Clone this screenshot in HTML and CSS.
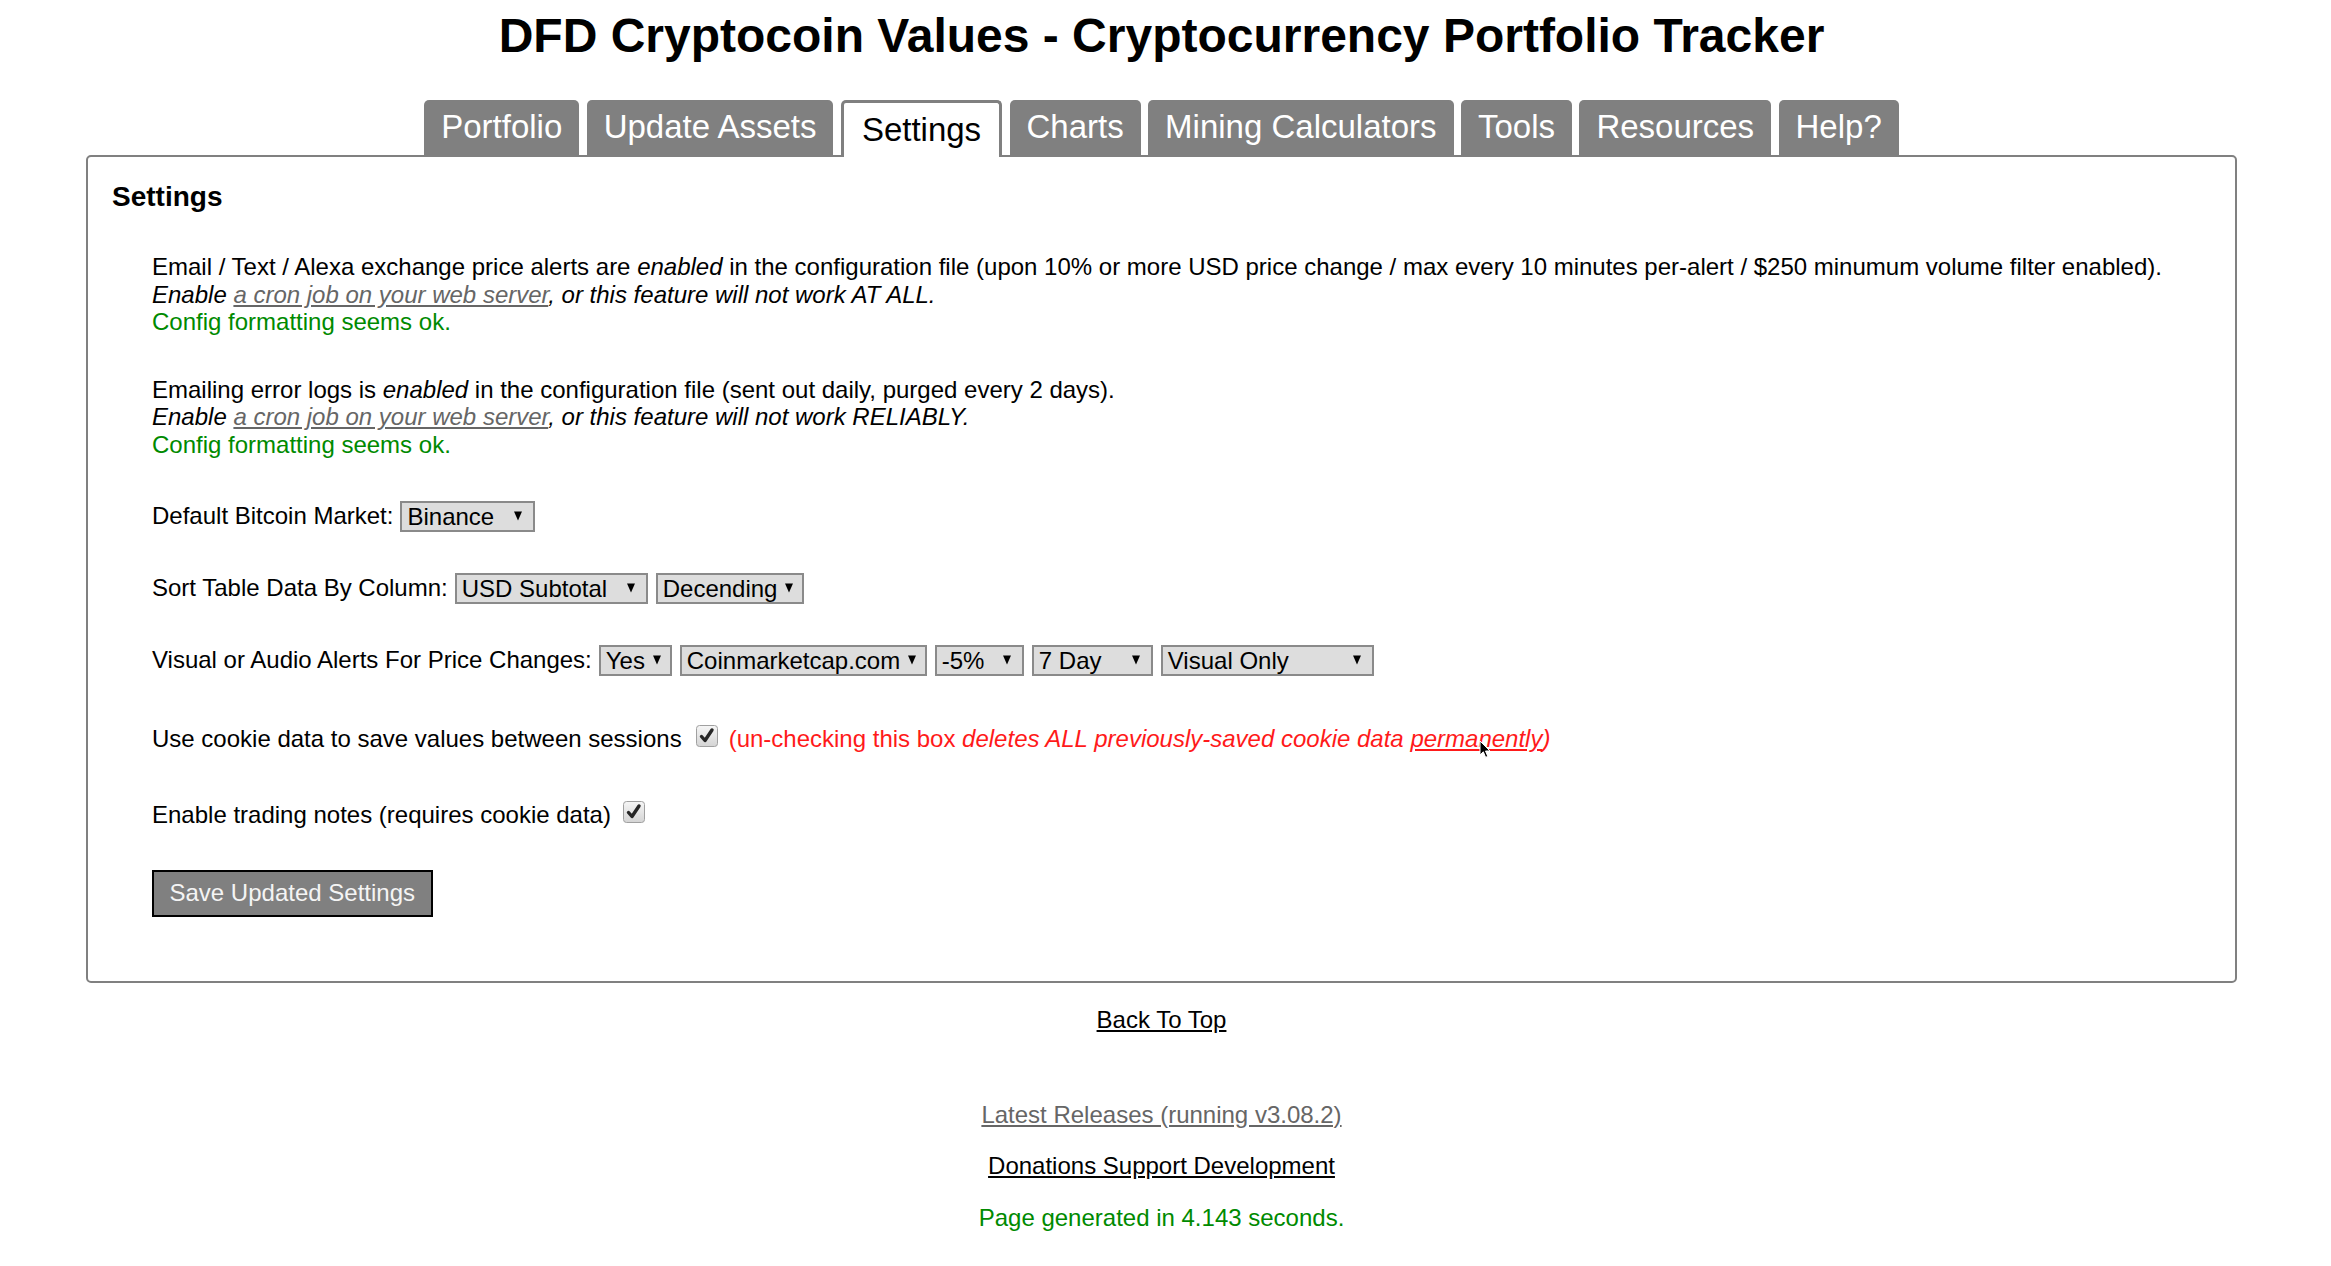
FILE: index.html
```html
<!DOCTYPE html>
<html lang="en">
<head>
<meta charset="utf-8">
<title>DFD Cryptocoin Values - Cryptocurrency Portfolio Tracker</title>
<link rel="stylesheet" href="styles.css">
</head>
<body>
<div class="wrap">
  <h1 class="title">DFD Cryptocoin Values - Cryptocurrency Portfolio Tracker</h1>
  <nav class="tabs">
    <span class="tab">Portfolio</span>
    <span class="tab">Update Assets</span>
    <span class="tab active">Settings</span>
    <span class="tab">Charts</span>
    <span class="tab">Mining Calculators</span>
    <span class="tab">Tools</span>
    <span class="tab">Resources</span>
    <span class="tab">Help?</span>
  </nav>
  <section class="panel">
    <h3 class="panel-title">Settings</h3>
    <div class="content">
      <p class="item">Email / Text / Alexa exchange price alerts are <i>enabled</i> in the configuration file (upon 10% or more USD price change / max every 10 minutes per-alert / $250 minumum volume filter enabled).<br>
      <i>Enable <a class="glink" href="#">a cron job on your web server</a>, or this feature will not work AT ALL.</i><br>
      <span class="ok">Config formatting seems ok.</span></p>

      <p class="item p-last">Emailing error logs is <i>enabled</i> in the configuration file (sent out daily, purged every 2 days).<br>
      <i>Enable <a class="glink" href="#">a cron job on your web server</a>, or this feature will not work RELIABLY.</i><br>
      <span class="ok">Config formatting seems ok.</span></p>

      <div class="item row">
        <span>Default Bitcoin Market:</span>
        <span class="sel w-binance"><span>Binance</span><svg class="arr" viewBox="0 0 8 9"><polygon points="0,0 8,0 4,9"/></svg></span>
      </div>

      <div class="item row">
        <span>Sort Table Data By Column:</span>
        <span class="sel w-usd"><span>USD Subtotal</span><svg class="arr" viewBox="0 0 8 9"><polygon points="0,0 8,0 4,9"/></svg></span>
        <span class="sel w-dec"><span>Decending</span><svg class="arr" viewBox="0 0 8 9"><polygon points="0,0 8,0 4,9"/></svg></span>
      </div>

      <div class="item row row-last">
        <span>Visual or Audio Alerts For Price Changes:</span>
        <span class="sel w-yes"><span>Yes</span><svg class="arr" viewBox="0 0 8 9"><polygon points="0,0 8,0 4,9"/></svg></span>
        <span class="sel w-cmc"><span>Coinmarketcap.com</span><svg class="arr" viewBox="0 0 8 9"><polygon points="0,0 8,0 4,9"/></svg></span>
        <span class="sel w-pct"><span>-5%</span><svg class="arr" viewBox="0 0 8 9"><polygon points="0,0 8,0 4,9"/></svg></span>
        <span class="sel w-day"><span>7 Day</span><svg class="arr" viewBox="0 0 8 9"><polygon points="0,0 8,0 4,9"/></svg></span>
        <span class="sel w-vis"><span>Visual Only</span><svg class="arr" viewBox="0 0 8 9"><polygon points="0,0 8,0 4,9"/></svg></span>
      </div>

      <div class="item crow">
        <span>Use cookie data to save values between sessions</span>
        <svg class="cb" viewBox="0 0 22 22"><defs><linearGradient id="g1" x1="0" y1="0" x2="0" y2="1"><stop offset="0" stop-color="#f6f6f6"/><stop offset="1" stop-color="#d4d4d4"/></linearGradient></defs><rect x="0.5" y="0.5" width="21" height="21" rx="3" fill="url(#g1)" stroke="#a0a0a0"/><path d="M5.5 11.5 L9 15.5 L16 5" fill="none" stroke="#262626" stroke-width="3.4" stroke-linecap="round" stroke-linejoin="round"/></svg>
        <span class="warn">(un-checking this box <i>deletes ALL previously-saved cookie data <a class="rlink" href="#">permanently</a>)</i></span>
      </div>

      <div class="item crow crow-last">
        <span>Enable trading notes (requires cookie data)</span>
        <svg class="cb cb2" viewBox="0 0 22 22"><defs><linearGradient id="g2" x1="0" y1="0" x2="0" y2="1"><stop offset="0" stop-color="#f6f6f6"/><stop offset="1" stop-color="#d4d4d4"/></linearGradient></defs><rect x="0.5" y="0.5" width="21" height="21" rx="3" fill="url(#g2)" stroke="#a0a0a0"/><path d="M5.5 11.5 L9 15.5 L16 5" fill="none" stroke="#262626" stroke-width="3.4" stroke-linecap="round" stroke-linejoin="round"/></svg>
      </div>

      <div class="item">
        <button class="save" type="button">Save Updated Settings</button>
      </div>
    </div>
  </section>

  <footer class="footer">
    <p class="f-top"><a class="blink" href="#">Back To Top</a></p>
    <p class="f-rel"><a class="glink2" href="#">Latest Releases (running v3.08.2)</a></p>
    <p class="f-don"><a class="blink" href="#">Donations Support Development</a></p>
    <p class="f-gen">Page generated in 4.143 seconds.</p>
  </footer>
</div>

<svg class="cursor" viewBox="0 0 12 19"><path d="M1 1 L1 15 L4.3 11.8 L6.6 17.3 L8.8 16.4 L6.5 11 L11 11 Z" fill="#000" stroke="#fff" stroke-width="1"/></svg>
</body>
</html>
```

FILE: styles.css
```css
html, body {
  background: #ffffff;
}
body {
  margin: 8px 0 0;
  font-family: "Liberation Sans", Arial, sans-serif;
  font-size: 24px;
  line-height: 1.15;
  color: #000;
  position: relative;
}
.wrap {
  width: 2151px;
  margin-left: 86px;
}
.title {
  margin: 0;
  font-size: 48px;
  line-height: 55px;
  text-align: center;
  font-weight: bold;
}
.tabs {
  display: flex;
  justify-content: center;
  align-items: flex-end;
  gap: 7.4px;
  margin-top: 37px;
  margin-bottom: -2px;
  position: relative;
  z-index: 1;
}
.tab {
  display: block;
  background: #808080;
  color: #ffffff;
  font-size: 33px;
  line-height: 38px;
  padding: 7.5px 17px 11.5px;
  border-radius: 5px 5px 0 0;
}
.tab.active {
  background: #ffffff;
  color: #000000;
  border: 3px solid #808080;
  border-bottom: none;
  padding: 7.5px 18px 8.5px;
}
.panel {
  border: 2px solid #808080;
  border-radius: 5px;
  padding: 24px 24px 24px;
}
.panel-title {
  margin: 0 0 40px;
  font-size: 28px;
  line-height: 32px;
  font-weight: bold;
}
.content {
  padding-left: 40px;
}
.item {
  margin: 0 0 40px;
}
p.item {
  line-height: 27.6px;
}
.item.p-last {
  margin-bottom: 41.5px;
}
.ok {
  color: #008a00;
}
.glink {
  color: #666666;
  text-decoration: underline;
}
.row {
  display: flex;
  align-items: center;
  gap: 8px;
  height: 32px;
}
.row > span:first-child {
  margin-right: -1px;
}
.item.row-last {
  margin-bottom: 44.5px;
}
.sel {
  box-sizing: border-box;
  display: inline-flex;
  align-items: center;
  justify-content: space-between;
  height: 31px;
  border: 2px solid #8a8a8a;
  background: #dddddd;
  padding: 0 11px 0 5px;
  line-height: 27px;
}
.arr {
  width: 8px;
  height: 10px;
  flex: none;
}
.w-binance { width: 135px; }
.w-usd { width: 193px; }
.w-dec { width: 148px; padding-right: 9px; }
.w-yes { width: 73px; padding-right: 9px; }
.w-cmc { width: 247px; padding-right: 9px; }
.w-pct { width: 89px; }
.w-day { width: 121px; }
.w-vis { width: 213px; }
.crow {
  display: flex;
  align-items: center;
  height: 36px;
}
.item.crow-last {
  margin-bottom: 37px;
}
.cb {
  width: 22px;
  height: 22px;
  margin-left: 14px;
  margin-top: -5px;
  flex: none;
}
.cb2 {
  margin-left: 12px;
}
.warn {
  color: #ff1a1a;
  margin-left: 11px;
}
.rlink {
  color: #ff1a1a;
  text-decoration: underline;
}
.save {
  font-family: "Liberation Sans", Arial, sans-serif;
  font-size: 24px;
  line-height: 28px;
  color: #f4f4f4;
  background: #808080;
  border: 2px solid #000;
  padding: 7px 15.5px;
  height: 47px;
  border-radius: 0;
}
.footer {
  text-align: center;
}
.footer p {
  margin: 0;
  line-height: 27.6px;
}
.f-top { padding-top: 23.5px; }
.f-rel { padding-top: 67px; }
.f-don { padding-top: 24px; }
.f-gen { padding-top: 24px; color: #008a00; }
.blink {
  color: #000;
  text-decoration: underline;
}
.glink2 {
  color: #666666;
  text-decoration: underline;
}
.cursor {
  position: absolute;
  left: 1479px;
  top: 732px;
  width: 12px;
  height: 19px;
}
```
